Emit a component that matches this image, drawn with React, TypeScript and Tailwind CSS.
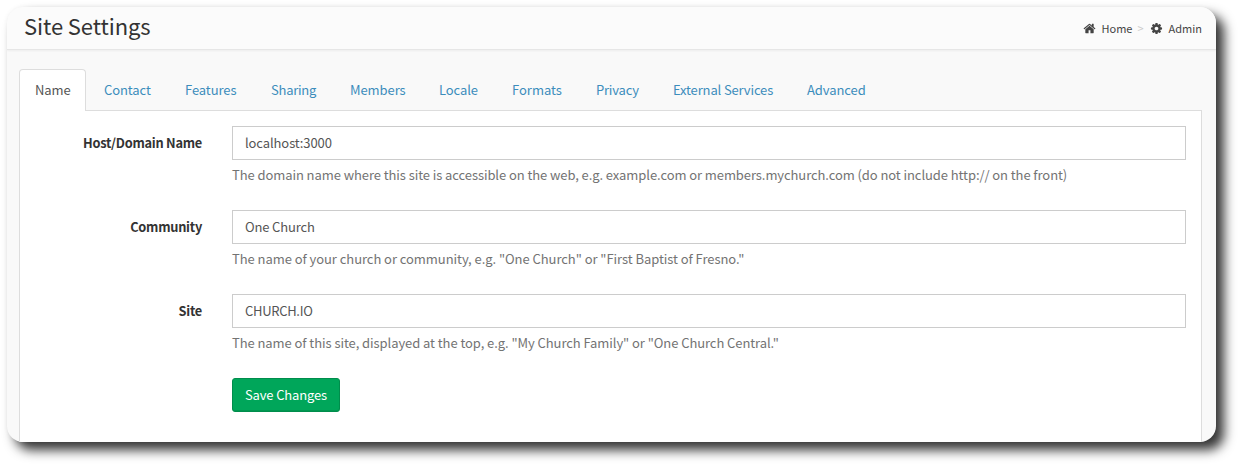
const HOME =
  'M1472 992v480q0 26-19 45t-45 19h-384v-384h-256v384h-384q-26 0-45-19t-19-45v-480q0-1 .5-3t.5-3l575-474 575 474q1 2 1 6zm223-69l-62 74q-8 9-21 11h-3q-13 0-21-7l-692-577-692 577q-12 8-24 7-13-2-21-11l-62-74q-8-10-7-23.5t11-21.5l719-599q32-26 76-26t76 26l244 204v-195q0-14 9-23t23-9h192q14 0 23 9t9 23v408l219 182q10 8 11 21.5t-7 23.5z';
const COG =
  'M1152 896q0-106-75-181t-181-75-181 75-75 181 75 181 181 75 181-75 75-181zm512-109v222q0 12-8 23t-20 13l-185 28q-19 54-39 91 35 50 107 138 10 12 10 25t-9 23q-27 37-99 108t-94 71q-12 0-26-9l-138-108q-44 23-91 38-16 136-29 186-7 28-36 28h-222q-14 0-24.5-8.5t-11.5-21.5l-28-184q-49-16-90-37l-141 107q-10 9-25 9-14 0-25-11-126-114-165-168-7-10-7-23 0-12 8-23 15-21 51-66.5t54-70.5q-27-50-41-99l-183-27q-13-2-21-12.5t-8-23.5v-222q0-12 8-23t19-13l186-28q14-46 39-92-40-57-107-138-10-12-10-24 0-10 9-23 26-36 98.5-107.5t94.5-71.5q13 0 26 10l138 107q44-23 91-38 16-136 29-186 7-28 36-28h222q14 0 24.5 8.5t11.5 21.5l28 184q49 16 90 37l142-107q9-9 24-9 13 0 25 10 129 119 165 170 7 8 7 22 0 12-8 23-15 21-51 66.5t-54 70.5q26 50 41 98l183 28q13 2 21 12.5t8 23.5z';

function Icon({ d }: { d: string }) {
  return (
    <svg viewBox="0 0 1792 1792" className="size-[13px] shrink-0 fill-current">
      <path d={d} />
    </svg>
  );
}

const tabs = [
  { name: 'Contact', width: 'w-[79px]' },
  { name: 'Features', width: 'w-[84px]' },
  { name: 'Sharing', width: 'w-[77px] tracking-[-0.25px]' },
  { name: 'Members', width: 'w-[87px]' },
  { name: 'Locale', width: 'w-[71px]' },
  { name: 'Formats', width: 'w-[82px] tracking-normal' },
  { name: 'Privacy', width: 'w-[75px] tracking-[-0.2px]' },
  { name: 'External Services', width: 'w-[132px] tracking-[-0.14px]' },
  { name: 'Advanced', width: 'w-[91px]' },
];

const fields = [
  {
    label: 'Host/Domain Name',
    value: 'localhost:3000',
    tracking: 'tracking-[-0.1px]',
    helpTracking: 'tracking-[-0.08px]',
    help: 'The domain name where this site is accessible on the web, e.g. example.com or members.mychurch.com (do not include http:// on the front)',
  },
  {
    label: 'Community',
    value: 'One Church',
    tracking: 'tracking-[-0.15px]',
    helpTracking: 'tracking-[-0.055px]',
    help: 'The name of your church or community, e.g. "One Church" or "First Baptist of Fresno."',
  },
  {
    label: 'Site',
    value: 'CHURCH.IO',
    tracking: 'tracking-[-0.3px]',
    helpTracking: 'tracking-[-0.07px]',
    help: 'The name of this site, displayed at the top, e.g. "My Church Family" or "One Church Central."',
  },
];

export default function App() {
  return (
    <div className="h-[465px] w-[1239px] overflow-hidden bg-white pt-[7px] pl-[7px] font-['Noto_Sans_CJK_SC',sans-serif] text-[13px] leading-5 tracking-[-0.08px] text-[#333]">
      <div className="flex h-[435px] w-[1209px] flex-col overflow-hidden rounded-[16px] bg-[#f9f9f9] shadow-[8px_8px_12px_#000c,0_0_4px_#0000000a]">
        <header className="flex h-[43px] shrink-0 items-center justify-between border-b border-[#e6e6e6] bg-[#fbfbfb] pr-[14px] pl-[17px] shadow-[0_1px_2px_#0000000d]">
          <h1 className="pb-[7px] text-[22px] leading-[26px]">Site Settings</h1>
          <nav className="flex items-center text-[11px] tracking-normal text-[#444]">
            <Icon d={HOME} />
            <span className="ml-[5px]">Home</span>
            <span className="mr-[6px] ml-[5px] text-[#ccc]">&gt;</span>
            <Icon d={COG} />
            <span className="ml-[6px]">Admin</span>
          </nav>
        </header>
        <main className="flex grow flex-col pt-[19px] pr-[14px] pl-3">
          <div className="flex h-[42px] shrink-0 gap-[2px] border-b border-[#ddd]">
            <div className="h-[42px] w-[67px] rounded-t border border-b-0 border-[#ddd] bg-white px-[15px] py-[10px] text-[#555]">Name</div>
            {tabs.map((t) => (
              <a key={t.name} className={`${t.width} border border-transparent px-[15px] py-[10px] whitespace-nowrap text-[#3c8dbc]`}>
                {t.name}
              </a>
            ))}
          </div>
          <form className="flex grow flex-col border-x border-[#ddd] bg-white pt-[15px] pr-[15px]">
            {fields.map((f) => (
              <div key={f.label} className="flex h-[84px] shrink-0">
                <label className="w-[182px] shrink-0 pt-[7px] text-right text-[12.8px] font-bold tracking-[-0.25px]">{f.label}</label>
                <div className="ml-[30px] grow">
                  <div className={`${f.tracking} h-[34px] border border-[#ccc] px-3 py-[6px] text-[#555]`}>{f.value}</div>
                  <p className={`${f.helpTracking} mt-[5px] whitespace-nowrap text-[#737373]`}>{f.help}</p>
                </div>
              </div>
            ))}
            <button
              type="button"
              className="ml-[212px] h-[34px] w-[108px] rounded-[3px] border border-[#008d4c] bg-[#00a65a] tracking-[-0.14px] text-white shadow-[inset_0_-1px_0_#00000017]"
            >
              Save Changes
            </button>
          </form>
        </main>
      </div>
    </div>
  );
}
